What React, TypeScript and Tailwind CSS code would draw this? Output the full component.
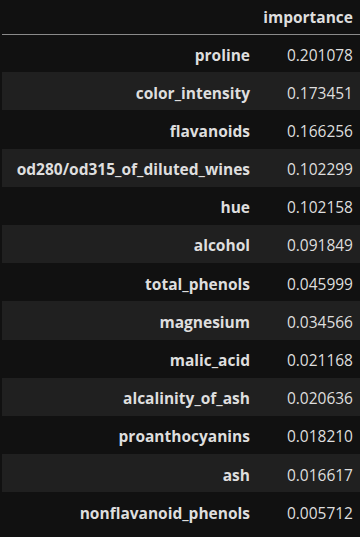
const rows: [string, string][] = [
  ['proline', '0.201078'],
  ['color_intensity', '0.173451'],
  ['flavanoids', '0.166256'],
  ['od280/od315_of_diluted_wines', '0.102299'],
  ['hue', '0.102158'],
  ['alcohol', '0.091849'],
  ['total_phenols', '0.045999'],
  ['magnesium', '0.034566'],
  ['malic_acid', '0.021168'],
  ['alcalinity_of_ash', '0.020636'],
  ['proanthocyanins', '0.018210'],
  ['ash', '0.016617'],
  ['nonflavanoid_phenols', '0.005712'],
];

export default function App() {
  return (
    <div className="min-h-screen w-[360px] bg-[#111111] pl-[2px] font-['Open_Sans',sans-serif] text-[15.5px] text-[#dedede]">
      <table className="w-[358px] border-collapse">
        <thead>
          <tr className="h-[34px] border-b border-[#8a8a8a]">
            <th className="w-[252px]"></th>
            <th className="pt-[2px] pr-[7px] text-right align-middle font-bold">importance</th>
          </tr>
        </thead>
        <tbody>
          {rows.map(([name, value], i) => (
            <tr key={name} className={`h-[38.2px] ${i % 2 === 1 ? 'bg-[#202020]' : ''}`}>
              <th className="pt-[4px] pr-[4px] text-right font-bold whitespace-nowrap">{name}</th>
              <td className="pt-[4px] pr-[7px] text-right tabular-nums">{value}</td>
            </tr>
          ))}
        </tbody>
      </table>
    </div>
  );
}
